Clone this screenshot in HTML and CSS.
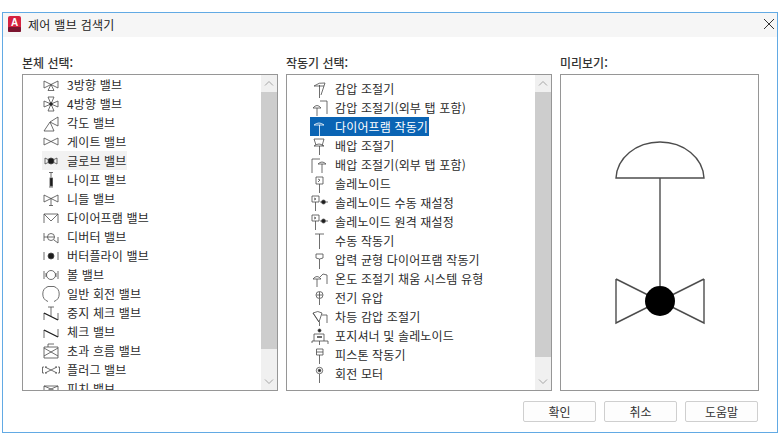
FILE: index.html
```html
<!DOCTYPE html>
<html lang="ko">

<head>
    <meta charset="UTF-8">
    <title>제어 밸브 검색기</title>
    <link rel="stylesheet" href="styles.css">
</head>

<body>
    <div class="dialog">
        <div class="titlebar">
            <svg class="app-icon" width="13" height="16" viewBox="0 0 13 16">
                <rect x="0" y="0" width="13" height="16" rx="2" fill="#d5213f"/>
                <rect x="0" y="11" width="13" height="5" rx="1" fill="#7c1530"/>
                <text x="6.500" y="10" class="app-letter">A</text>
            </svg>
            <span class="title">제어 밸브 검색기</span>
            <svg class="close" width="12" height="12" viewBox="0 0 12 12"><path d="M1 1l10 10M11 1L1 11"/></svg>
        </div>

        <div class="panes">
            <div class="pane">
                <div class="pane-label">본체 선택:</div>
                <div class="listbox">
                    <ul class="items items-body">
                        <li class="item"><svg class="glyph" viewBox="1 0 24 18"><path d="M3 5v7l7-3.500zM17 5v7l-7-3.500zM10 8.500l-3 6h6z"/></svg><span>3방향 밸브</span></li>
                        <li class="item"><svg class="glyph" viewBox="1 0 24 18"><path d="M3 6v6l7-3zM17 6v6l-7-3zM10 9l-3-7h6zM10 9l-3 7h6z"/><circle class="solid" cx="10" cy="9" r="1.500"/></svg><span>4방향 밸브</span></li>
                        <li class="item"><svg class="glyph" viewBox="1 0 24 18"><path d="M3 17h10l-4-9zM9 8l8-5v9z"/></svg><span>각도 밸브</span></li>
                        <li class="item"><svg class="glyph" viewBox="1 0 24 18"><path d="M3 5v7l7-3.500zM17 5v7l-7-3.500z"/></svg><span>게이트 밸브</span></li>
                        <li class="item item-hover"><svg class="glyph" viewBox="1 0 24 18"><path d="M4 6v6l6-3zM16 6v6l-6-3z"/><circle class="solid" cx="10" cy="9" r="3"/></svg><span>글로브 밸브</span></li>
                        <li class="item"><svg class="glyph" viewBox="1 0 24 18"><path d="M8 1.500h4M10 1.500v5"/><rect class="solid" x="9" y="7" width="2.500" height="8"/><path d="M8 16h4"/></svg><span>나이프 밸브</span></li>
                        <li class="item"><svg class="glyph" viewBox="1 0 24 18"><path d="M3 5v7l7-3.500zM17 5v7l-7-3.500zM10 8.500v7M8 15.500h4"/></svg><span>니들 밸브</span></li>
                        <li class="item"><svg class="glyph" viewBox="1 0 24 18"><path d="M3 14V5h14v9M3 5l7 7 7-7"/></svg><span>다이어프램 밸브</span></li>
                        <li class="item"><svg class="glyph" viewBox="1 0 24 18"><path d="M3 5v8M3 9h3.500M13 12l4 3M17 9v6M6.500 9h7"/><circle cx="10" cy="9" r="3.500"/></svg><span>디버터 밸브</span></li>
                        <li class="item"><svg class="glyph" viewBox="1 0 24 18"><path d="M3 5v8M17 5v8"/><circle class="solid" cx="10" cy="9" r="3"/></svg><span>버터플라이 밸브</span></li>
                        <li class="item"><svg class="glyph" viewBox="1 0 24 18"><path d="M3 5v8M5 7v4M17 5v8M15 7v4"/><circle cx="10" cy="9" r="4.500"/></svg><span>볼 밸브</span></li>
                        <li class="item"><svg class="glyph" viewBox="1 0 24 18"><path d="M7 1.500a8 8 0 0 0 0 15M13 1.500a8 8 0 0 1 0 15M7 1.500h6"/></svg><span>일반 회전 밸브</span></li>
                        <li class="item"><svg class="glyph" viewBox="1 0 24 18"><path d="M3 16V9M17 16V9M7 3h6M10 3v9"/><path class="thick" d="M3 9l14 7"/></svg><span>중지 체크 밸브</span></li>
                        <li class="item"><svg class="glyph" viewBox="1 0 24 18"><path d="M3 15V7M17 14V6"/><path class="thick" d="M3 7l14 7"/></svg><span>체크 밸브</span></li>
                        <li class="item"><svg class="glyph" viewBox="1 0 24 18"><path d="M3 5h14v11H3zM3 6l14 8M17 6L3 14M7 5V2h6"/></svg><span>초과 흐름 밸브</span></li>
                        <li class="item"><svg class="glyph" viewBox="1 0 24 18"><path d="M3 6H1.500v6H3M17 6h1.500v6H17M4 6l12 6M16 6L4 12M4 6h2M14 12h2M14 6h2M4 12h2"/></svg><span>플러그 밸브</span></li>
                        <li class="item"><svg class="glyph" viewBox="1 0 24 18"><path d="M3 6v6l7-3zM17 6v6l-7-3zM3 6h14M3 12h14"/></svg><span>피치 밸브</span></li>
                    </ul>
                    <div class="scrollbar">
                        <svg class="arrow" viewBox="0 0 16 17"><path d="M4 10.500l4-4 4 4"/></svg>
                        <div class="thumb thumb-body"></div>
                        <svg class="arrow arrow-down" viewBox="0 0 16 17"><path d="M4 6.500l4 4 4-4"/></svg>
                    </div>
                </div>
            </div>

            <div class="pane">
                <div class="pane-label">작동기 선택:</div>
                <div class="listbox">
                    <ul class="items items-actuator">
                        <li class="item"><svg class="glyph" viewBox="0 0 24 18"><path d="M4 6q5-4 11-3l-4 12M9.500 5v13M4 6l10 0"/></svg><span>감압 조절기</span></li>
                        <li class="item"><svg class="glyph" viewBox="0 0 24 18"><path d="M3 9q4-5 8 0zM7 9v8M10 2h7v13"/></svg><span>감압 조절기(외부 탭 포함)</span></li>
                        <li class="item item-selected"><svg class="glyph" viewBox="0 0 24 18"><path d="M4 7q5-4 10 0zM9.500 7v11"/></svg><span>다이어프램 작동기</span></li>
                        <li class="item"><svg class="glyph" viewBox="0 0 24 18"><path d="M4 2h10l-2 7M4 2l2 6M4 9q5-4 10 0zM9.500 9v9"/></svg><span>배압 조절기</span></li>
                        <li class="item"><svg class="glyph" viewBox="0 0 24 18"><path d="M2 17V3h8M8 8q4-4 8 0zM12 8v9"/></svg><span>배압 조절기(외부 탭 포함)</span></li>
                        <li class="item"><svg class="glyph" viewBox="0 0 24 18"><path d="M6 2h7v7H6zM9.500 9v9M8 4l2 1-2 2"/></svg><span>솔레노이드</span></li>
                        <li class="item"><svg class="glyph" viewBox="0 0 24 18"><path d="M2 2h7v6H2zM5.500 8v9M4 4l2 1-2 1M10 8h2"/><circle class="solid" cx="13.500" cy="8" r="2"/><path d="M16 8h2"/></svg><span>솔레노이드 수동 재설정</span></li>
                        <li class="item"><svg class="glyph" viewBox="0 0 24 18"><path d="M2 2h7v6H2zM5.500 8v9M4 4l2 1-2 1M10 8h2"/><circle class="solid" cx="13.500" cy="8" r="2"/><path d="M16 8h2"/></svg><span>솔레노이드 원격 재설정</span></li>
                        <li class="item"><svg class="glyph" viewBox="0 0 24 18"><path d="M5 2h9M9.500 2v15"/></svg><span>수동 작동기</span></li>
                        <li class="item"><svg class="glyph" viewBox="0 0 24 18"><path d="M6 3h7v4q-3.500 2-7 0zM9.500 8v10"/></svg><span>압력 균형 다이어프램 작동기</span></li>
                        <li class="item"><svg class="glyph" viewBox="0 0 24 18"><path d="M3 9q4-5 8 0zM7 9v8M10 7l3-3 4 1v9"/></svg><span>온도 조절기 채움 시스템 유형</span></li>
                        <li class="item"><svg class="glyph" viewBox="0 0 24 18"><circle cx="9.500" cy="6" r="3.500"/><path d="M6.500 6h6M9.500 3v6M9.500 9.500V16"/></svg><span>전기 유압</span></li>
                        <li class="item"><svg class="glyph" viewBox="0 0 24 18"><path d="M3 5q5-3 9 0l-3 9zM3 5l6 9M9.500 14v4M12 7h5v8"/></svg><span>차등 감압 조절기</span></li>
                        <li class="item"><svg class="glyph" viewBox="0 0 24 18"><path d="M4 14V7h10v7M2 14h16M9.500 14v4M2 14v2M18 14v3"/><circle class="solid" cx="9.500" cy="3.500" r="1.500"/><path class="thick" d="M7 10h5"/></svg><span>포지셔너 및 솔레노이드</span></li>
                        <li class="item"><svg class="glyph" viewBox="0 0 24 18"><path d="M6.500 3h6.500v6H6.500zM6.500 6h6.500M9.500 9v9"/></svg><span>피스톤 작동기</span></li>
                        <li class="item"><svg class="glyph" viewBox="0 0 24 18"><circle cx="9.500" cy="5.500" r="3.200"/><circle class="solid" cx="9.500" cy="5.500" r="1.300"/><path d="M9.500 9v9"/></svg><span>회전 모터</span></li>
                    </ul>
                    <div class="scrollbar">
                        <svg class="arrow" viewBox="0 0 16 17"><path d="M4 10.500l4-4 4 4"/></svg>
                        <div class="thumb thumb-actuator"></div>
                        <svg class="arrow arrow-down" viewBox="0 0 16 17"><path d="M4 6.500l4 4 4-4"/></svg>
                    </div>
                </div>
            </div>

            <div class="pane">
                <div class="pane-label">미리보기:</div>
                <div class="preview">
                    <svg class="preview-art" viewBox="0 0 197 315">
                        <path d="M55 103h88c-1-20-20-36-44-36s-43 16-44 36zM99 103v108M55 204v44l32-16M55 204l32 16M143 204v44l-32-16M143 204l-32 16"/>
                        <circle cx="99" cy="226" r="15"/>
                    </svg>
                </div>
            </div>
        </div>

        <div class="buttons">
            <button class="btn">확인</button>
            <button class="btn">취소</button>
            <button class="btn">도움말</button>
        </div>
    </div>
</body>

</html>
```

FILE: styles.css
```css
html,
body {
    height: 100%;
}

body {
    margin: 0;
    background: #fff;
    font-family: "Noto Sans CJK KR", "Liberation Sans", sans-serif;
    font-size: 12px;
    color: #2b2b2b;
    overflow: hidden;
}

.dialog {
    margin: 12px 0 0 2px;
    width: 776px;
    height: 421px;
    box-sizing: border-box;
    border: 1px solid #62aae4;
    background: #fff;
}

.titlebar {
    display: flex;
    align-items: center;
    box-sizing: border-box;
    height: 24px;
    padding: 0 2px 2px 5px;
    background: #f6f6f6;
}

.app-letter {
    font-size: 10px;
    font-weight: bold;
    fill: #fff;
    text-anchor: middle;
    font-family: "Liberation Sans", sans-serif;
}

.title {
    margin-left: 7px;
    flex: 1;
    font-size: 12px;
    letter-spacing: 0.3px;
    color: #222;
}

.close path {
    fill: none;
    stroke: #333;
    stroke-width: 1;
}

.panes {
    display: grid;
    grid-template-columns: 256px 266px 199px;
    column-gap: 8px;
    padding: 19px 0 0 19px;
}

.pane-label {
    height: 18px;
    line-height: 14px;
    color: #333;
    font-weight: 500;
}

.listbox,
.preview {
    display: flex;
    height: 317px;
    box-sizing: border-box;
    border: 1px solid #969696;
    background: #fff;
}

.items {
    flex: 1;
    margin: 0;
    list-style: none;
    overflow: hidden;
}

.items-body {
    padding: 0 0 0 19px;
}

.items-actuator {
    padding: 4px 0 0 23px;
}

.item {
    display: flex;
    align-items: center;
    width: fit-content;
    height: 19px;
    padding-right: 1px;
    white-space: nowrap;
}

.item span {
    margin-left: 1px;
    letter-spacing: 0.15px;
}

.item-hover {
    background: #f2f2f2;
}

.item-selected {
    background: #0a64b4;
    color: #fff;
}

.glyph {
    width: 24px;
    height: 18px;
    flex: none;
}

.glyph path,
.glyph circle,
.glyph rect {
    fill: none;
    stroke: #4a4a4a;
    stroke-width: 0.8;
}

.glyph .solid {
    fill: #1c1c1c;
}

.glyph .thick {
    stroke: #1c1c1c;
    stroke-width: 1.3;
}

.item-selected .glyph path {
    stroke: #fff;
}

.scrollbar {
    display: flex;
    flex-direction: column;
    width: 16px;
    background: #f0f0f0;
}

.arrow {
    width: 16px;
    height: 17px;
    flex: none;
}

.arrow path {
    fill: none;
    stroke: #a6a6a6;
    stroke-width: 1;
}

.arrow-down {
    margin-top: auto;
}

.thumb {
    background: #cdcdcd;
}

.thumb-body {
    height: 257px;
}

.thumb-actuator {
    height: 265px;
}

.preview-art {
    width: 197px;
    height: 315px;
}

.preview-art path {
    fill: none;
    stroke: #4d4d4d;
    stroke-width: 1.4;
}

.preview-art circle {
    fill: #000;
}

.buttons {
    display: flex;
    justify-content: flex-end;
    gap: 8px;
    padding: 10px 19px 0 0;
}

.btn {
    width: 73px;
    height: 21px;
    padding: 0;
    border: 1px solid #cfcfcf;
    border-radius: 2px;
    background: #fdfdfd;
    font: inherit;
    color: #333;
}
```
